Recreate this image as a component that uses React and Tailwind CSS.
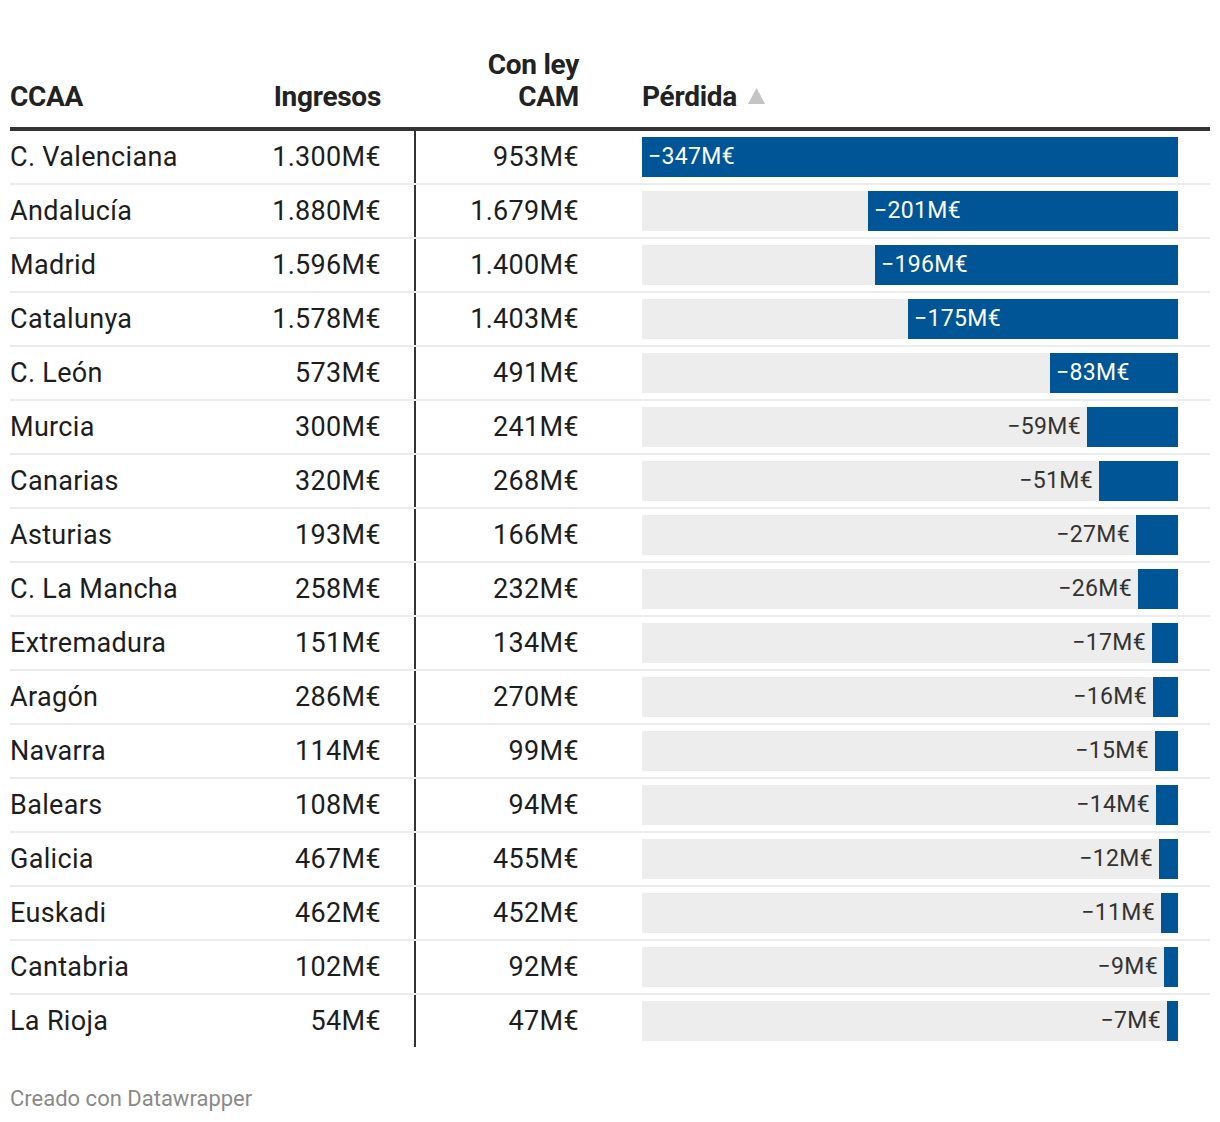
import React from 'react';

const rows = [
  ['C. Valenciana', '1.300M€', '953M€', 347],
  ['Andalucía', '1.880M€', '1.679M€', 201],
  ['Madrid', '1.596M€', '1.400M€', 196],
  ['Catalunya', '1.578M€', '1.403M€', 175],
  ['C. León', '573M€', '491M€', 83],
  ['Murcia', '300M€', '241M€', 59],
  ['Canarias', '320M€', '268M€', 51],
  ['Asturias', '193M€', '166M€', 27],
  ['C. La Mancha', '258M€', '232M€', 26],
  ['Extremadura', '151M€', '134M€', 17],
  ['Aragón', '286M€', '270M€', 16],
  ['Navarra', '114M€', '99M€', 15],
  ['Balears', '108M€', '94M€', 14],
  ['Galicia', '467M€', '455M€', 12],
  ['Euskadi', '462M€', '452M€', 11],
  ['Cantabria', '102M€', '92M€', 9],
  ['La Rioja', '54M€', '47M€', 7],
];

const MAX = 347;
const TRACK = 536;

function Bar({ value }) {
  const w = Math.round((value / MAX) * TRACK);
  const label = `\u2212${value}M€`;
  const inside = w > 110;
  return (
    <div className="flex h-[40px] w-[536px] justify-end bg-[#ededed]">
      {!inside && (
        <span className="self-center pr-[6px] text-[23px] tracking-[0.015em] text-[#333]">{label}</span>
      )}
      <div className="flex h-full items-center bg-[#005596] pl-[6px]" style={{ width: w }}>
        {inside && <span className="text-[23px] tracking-[0.015em] text-white">{label}</span>}
      </div>
    </div>
  );
}

export default function App() {
  return (
    <div className="min-h-[1122px] w-[1220px] bg-white pt-[49px] text-[#1d1d1d]" style={{ fontFamily: 'Roboto, "Liberation Sans", sans-serif' }}>
      <div className="ml-[10px] w-[1200px]">
        <div className="flex items-end border-b-[4px] border-[#333] pb-[14px] text-[28px] font-bold leading-[32px] tracking-[-0.01em] text-[#222]">
          <div className="w-[240px]">CCAA</div>
          <div className="w-[166px] pr-[35px] text-right">Ingresos</div>
          <div className="w-[194px] pr-[31px] text-right">
            Con ley
            <br />
            CAM
          </div>
          <div className="flex w-[600px] items-center pl-[32px]">
            Pérdida
            <svg className="mb-[2px] ml-[11px]" width="17" height="16" viewBox="0 0 17 16">
              <path d="M8.5 0 L17 16 L0 16 Z" fill="#c4c4c4" />
            </svg>
          </div>
        </div>
        {rows.map(([name, ing, cam, loss], i) => (
          <div
            key={name}
            className={`flex items-center text-[27px] tracking-[0.012em] ${i < rows.length - 1 ? 'h-[54px] border-b-2 border-[#ececec]' : 'h-[52px]'}`}
          >
            <div className="w-[240px]">{name}</div>
            <div className="flex h-full w-[166px] items-center justify-end border-r-2 border-[#333] pr-[33px]">{ing}</div>
            <div className="w-[194px] pr-[31px] text-right">{cam}</div>
            <div className="w-[600px] pl-[32px]">
              <Bar value={loss} />
            </div>
          </div>
        ))}
        <div className="mt-[35px] text-[22px] text-[#8a8a8a]">Creado con Datawrapper</div>
      </div>
    </div>
  );
}
